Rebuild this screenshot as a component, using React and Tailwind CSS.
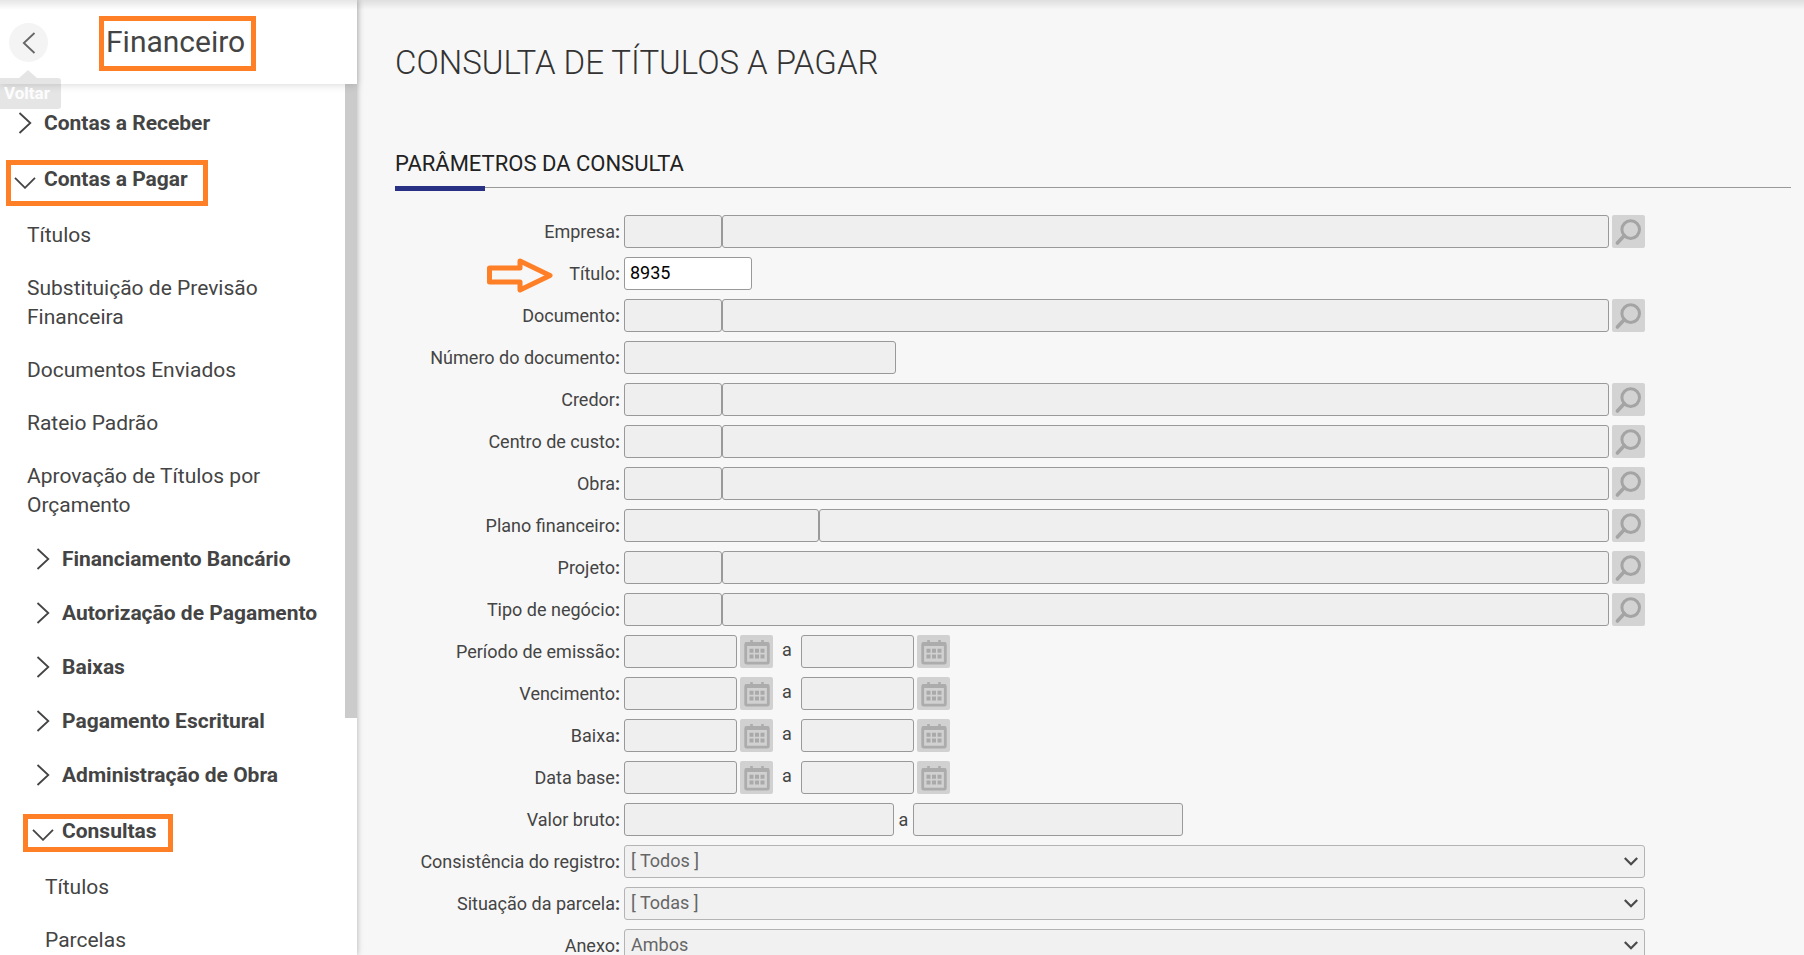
import React from 'react';

const rows = [
  { id: 'empresa', label: 'Empresa', type: 'lookup' },
  { id: 'titulo', label: 'Título', type: 'text', size: 'w-32', value: '8935', marked: true },
  { id: 'documento', label: 'Documento', type: 'lookup' },
  { id: 'numero', label: 'Número do documento', type: 'text', size: 'w-[272px]' },
  { id: 'credor', label: 'Credor', type: 'lookup' },
  { id: 'centro', label: 'Centro de custo', type: 'lookup' },
  { id: 'obra', label: 'Obra', type: 'lookup' },
  { id: 'plano', label: 'Plano financeiro', type: 'lookup', wide: true },
  { id: 'projeto', label: 'Projeto', type: 'lookup' },
  { id: 'negocio', label: 'Tipo de negócio', type: 'lookup' },
  { id: 'emissao', label: 'Período de emissão', type: 'period' },
  { id: 'vencimento', label: 'Vencimento', type: 'period' },
  { id: 'baixa', label: 'Baixa', type: 'period' },
  { id: 'database', label: 'Data base', type: 'period' },
  { id: 'valor', label: 'Valor bruto', type: 'range' },
  { id: 'consistencia', label: 'Consistência do registro', type: 'select', value: '[ Todos ]' },
  { id: 'situacao', label: 'Situação da parcela', type: 'select', value: '[ Todas ]' },
  { id: 'anexo', label: 'Anexo', type: 'select', value: 'Ambos' },
];

const field = 'h-[33px] rounded-[3px] border border-[#999] px-[5px] pb-[2px] text-black outline-none';

const ChevronRight = () => (
  <svg width="22" height="22" viewBox="0 0 22 22" fill="none" stroke="#444" strokeWidth="1.8">
    <path d="M5.5 1 16.3 11 5.5 21" />
  </svg>
);

const ChevronDown = () => (
  <svg className="mt-[6px]" width="22" height="12" viewBox="0 0 22 12" fill="none" stroke="#444" strokeWidth="1.8">
    <path d="M1 .8 11 10.8 21 .8" />
  </svg>
);

const SearchButton = ({ label }) => (
  <button type="button" aria-label={`Buscar ${label}`} className="size-[33px] shrink-0 rounded-[2px] bg-[#d3d3d3]">
    <svg width="33" height="33" viewBox="0 0 33 33" fill="none" stroke="#a4a4a4">
      <circle cx="18.7" cy="14.6" r="8.8" strokeWidth="3" />
      <path d="M12.4 20.6 5.4 28" strokeWidth="3.6" strokeLinecap="round" />
    </svg>
  </button>
);

const CalendarButton = ({ label }) => (
  <button type="button" aria-label={label} className="size-[33px] shrink-0 rounded-[2px] bg-[#d1d1d1]">
    <svg width="33" height="33" viewBox="0 0 33 33" fill="none">
      <rect x="5.7" y="8.4" width="22.6" height="19.8" rx="1" stroke="#acacac" strokeWidth="2.8" />
      <path d="M5 9.2h24" stroke="#acacac" strokeWidth="3.6" />
      <path d="M11.5 5v5M22.5 5v5" stroke="#acacac" strokeWidth="2.6" />
      <path
        d="M9.5 13.8h4v4h-4zM15 13.8h4v4h-4zM20.5 13.8h4v4h-4zM9.5 19.4h4v4h-4zM15 19.4h4v4h-4zM20.5 19.4h4v4h-4z"
        fill="#a9a9a9"
      />
    </svg>
  </button>
);

const Group = ({ children, nested, open, mark }) => (
  <li className={`relative flex ${open ? 'h-[59px]' : 'h-[54px]'} ${nested ? 'pl-8' : 'pl-[14px]'}`}>
    {mark && <span className={`pointer-events-none absolute border-[5px] border-[#ff7f27] ${mark}`} />}
    <button type="button" aria-expanded={!!open} className="flex items-center gap-2 font-bold">
      {open ? <ChevronDown /> : <ChevronRight />}
      {children}
    </button>
  </li>
);

const Item = ({ children, deep }) => (
  <li className={`py-3 pr-16 ${deep ? 'pl-[45px]' : 'pl-[27px]'}`}>
    <a href="#" className="block">
      {children}
    </a>
  </li>
);

const Sidebar = () => (
  <aside className="relative z-10 flex w-[357px] shrink-0 flex-col bg-white text-[#444] shadow-[0_0_6px_rgba(0,0,0,0.3)]">
    <header className="relative z-10 flex h-[84px] shrink-0 items-start bg-white pl-[9px] shadow-[0_1px_8px_rgba(0,0,0,0.15)]">
      <div className="relative mt-[23px]">
        <button
          type="button"
          aria-label="Voltar"
          className="flex size-[39px] items-center justify-center rounded-full bg-[#f4f4f4]"
        >
          <svg width="14" height="22" viewBox="0 0 14 22" fill="none" stroke="#666" strokeWidth="1.8">
            <path d="M12.5 1 1.8 11 12.5 21" />
          </svg>
        </button>
        <div role="tooltip" className="absolute top-[47px] -left-[9px] flex flex-col text-black/10">
          <svg className="ml-[19px]" width="18" height="8" viewBox="0 0 18 8" fill="currentColor">
            <path d="M9 0 18 8H0z" />
          </svg>
          <span className="h-[31px] w-[61px] rounded-r-[3px] bg-black/10 pl-1 text-[17px] leading-[31px] font-bold text-white/90">
            Voltar
          </span>
        </div>
      </div>
      <h2 className="mt-4 ml-[51px] h-[55px] w-[157px] border-[5px] border-[#ff7f27] pl-[2px] text-[30px] leading-[42px]">
        Financeiro
      </h2>
    </header>
    <nav className="flex min-h-0 flex-1 overflow-hidden">
      <ul className="flex-1 pt-3 text-[21px] leading-[29px]">
        <Group>Contas a Receber</Group>
        <Group open mark="left-[6px] top-[10px] h-[46px] w-[202px]">
          Contas a Pagar
        </Group>
        <Item>Títulos</Item>
        <Item>Substituição de Previsão Financeira</Item>
        <Item>Documentos Enviados</Item>
        <Item>Rateio Padrão</Item>
        <Item>Aprovação de Títulos por Orçamento</Item>
        <Group nested>Financiamento Bancário</Group>
        <Group nested>Autorização de Pagamento</Group>
        <Group nested>Baixas</Group>
        <Group nested>Pagamento Escritural</Group>
        <Group nested>Administração de Obra</Group>
        <Group nested open mark="left-[23px] top-3 h-[38px] w-[150px]">
          Consultas
        </Group>
        <Item deep>Títulos</Item>
        <Item deep>Parcelas</Item>
      </ul>
      <div className="h-[634px] w-3 shrink-0 bg-[#cbcbcb]" />
    </nav>
  </aside>
);

const Controls = ({ row }) => {
  const { id, label, type, value } = row;

  if (type === 'lookup') {
    return (
      <>
        <input id={id} className={`${field} bg-[#efefef] ${row.wide ? 'w-[195px]' : 'w-[98px]'}`} />
        <input aria-label={`${label} descrição`} className={`${field} mr-[3px] min-w-0 flex-1 bg-[#efefef]`} />
        <SearchButton label={label} />
      </>
    );
  }

  if (type === 'period') {
    return (
      <>
        <input id={id} className={`${field} mr-[3px] w-[113px] bg-[#efefef]`} />
        <CalendarButton label={`${label} inicial`} />
        <span className="w-7 pb-[3px] text-center">a</span>
        <input aria-label={`${label} até`} className={`${field} mr-[3px] w-[113px] bg-[#efefef]`} />
        <CalendarButton label={`${label} final`} />
      </>
    );
  }

  if (type === 'range') {
    return (
      <>
        <input id={id} className={`${field} w-[270px] bg-[#efefef]`} />
        <span className="w-[19px] text-center">a</span>
        <input aria-label={`${label} até`} className={`${field} w-[270px] bg-[#efefef]`} />
      </>
    );
  }

  if (type === 'select') {
    return (
      <div className="relative flex-1">
        <select
          id={id}
          className="block h-[33px] w-full appearance-none rounded-[3px] border border-[#b4b4b4] bg-[#f1f1f1] px-[6px] pb-[2px] text-[#666]"
        >
          <option>{value}</option>
        </select>
        <svg
          className="pointer-events-none absolute top-3 right-[7px]"
          width="14"
          height="9"
          viewBox="0 0 14 9"
          fill="none"
          stroke="#4a4a4a"
          strokeWidth="2.2"
        >
          <path d="m.8 1 6.2 6.2L13.2 1" />
        </svg>
      </div>
    );
  }

  return <input id={id} defaultValue={value} className={`${field} ${row.size} ${value ? 'bg-white' : 'bg-[#efefef]'}`} />;
};

const App = () => (
  <div className="relative flex h-screen overflow-hidden bg-[#f7f7f7] font-['Roboto',sans-serif]">
    <Sidebar />
    <main className="min-w-0 flex-1 overflow-hidden pr-[13px] pl-[38px] text-lg text-[#444]">
      <h1 className="pt-[42px] text-[33px] leading-[42px] font-light text-[#333]">CONSULTA DE TÍTULOS A PAGAR</h1>
      <h2 className="mt-[65px] text-[22px] leading-[30px] text-[#222]">PARÂMETROS DA CONSULTA</h2>
      {/* section rule with the blue tab lying over its left end */}
      <div className="relative mt-2 h-px bg-[#999]">
        <span className="absolute -top-px left-0 h-[5px] w-[90px] bg-[#283184]" />
      </div>
      <form className="mt-[27px] flex flex-col gap-[9px] pr-[146px]">
        {rows.map((row) => (
          <div key={row.id} className="relative flex h-[33px] items-center">
            {row.marked && (
              <svg
                className="absolute top-0 left-[91px]"
                width="68"
                height="38"
                viewBox="0 0 68 38"
                fill="none"
                stroke="#ff7f27"
                strokeWidth="5"
                strokeLinejoin="round"
              >
                <path d="M3.5 11H34V4l30 14.500L34 33v-8H3.500z" />
              </svg>
            )}
            <label htmlFor={row.id} className="mr-1 w-[225px] shrink-0 text-right">
              {row.label}
              <b>:</b>
            </label>
            <Controls row={row} />
          </div>
        ))}
      </form>
    </main>
    <div className="pointer-events-none absolute inset-x-0 top-0 z-20 h-[10px] bg-linear-to-b from-black/10 to-transparent" />
  </div>
);

export default App;
